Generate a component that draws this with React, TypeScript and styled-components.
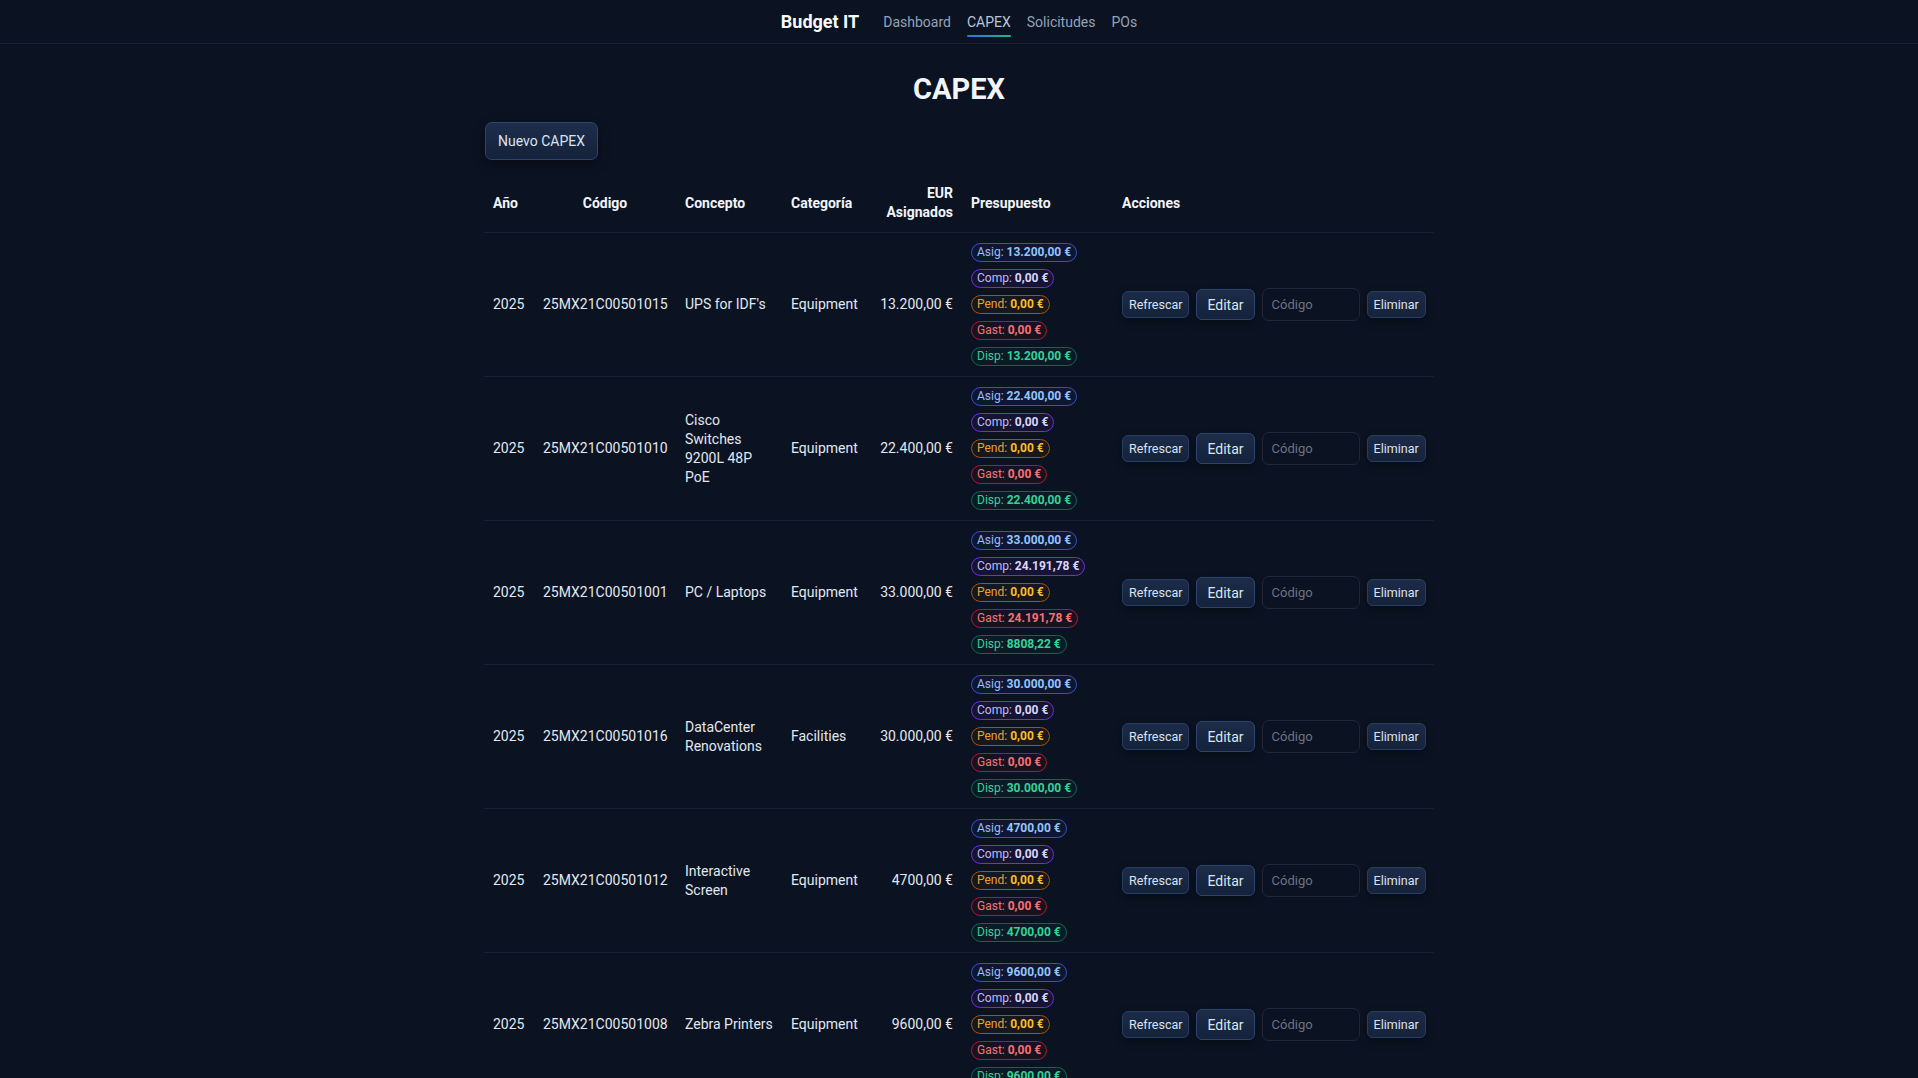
import React from "react"
import styled, { createGlobalStyle } from "styled-components"

const GlobalStyle = createGlobalStyle`
  html, body {
    margin: 0;
    padding: 0;
    background: #0b1221;
    color: #e2e8f0;
    font-family: "Segoe UI", Roboto, "Noto Sans", sans-serif;
    overflow: hidden;
  }
  * { box-sizing: border-box; }
`

type Row = {
  year: number
  code: string
  concept: string
  category: string
  amount: string
  comp: string
  pend: string
  gast: string
  disp: string
}

const rows: Row[] = [
  { year: 2025, code: "25MX21C00501015", concept: "UPS for IDF's", category: "Equipment", amount: "13.200,00 €", comp: "0,00 €", pend: "0,00 €", gast: "0,00 €", disp: "13.200,00 €" },
  { year: 2025, code: "25MX21C00501010", concept: "Cisco Switches 9200L 48P PoE", category: "Equipment", amount: "22.400,00 €", comp: "0,00 €", pend: "0,00 €", gast: "0,00 €", disp: "22.400,00 €" },
  { year: 2025, code: "25MX21C00501001", concept: "PC / Laptops", category: "Equipment", amount: "33.000,00 €", comp: "24.191,78 €", pend: "0,00 €", gast: "24.191,78 €", disp: "8808,22 €" },
  { year: 2025, code: "25MX21C00501016", concept: "DataCenter Renovations", category: "Facilities", amount: "30.000,00 €", comp: "0,00 €", pend: "0,00 €", gast: "0,00 €", disp: "30.000,00 €" },
  { year: 2025, code: "25MX21C00501012", concept: "Interactive Screen", category: "Equipment", amount: "4700,00 €", comp: "0,00 €", pend: "0,00 €", gast: "0,00 €", disp: "4700,00 €" },
  { year: 2025, code: "25MX21C00501008", concept: "Zebra Printers", category: "Equipment", amount: "9600,00 €", comp: "0,00 €", pend: "0,00 €", gast: "0,00 €", disp: "9600,00 €" },
]

const tones = {
  asig: { border: "#2d55c9", bg: "rgba(37, 99, 235, 0.08)", label: "#9fbcf5", value: "#93c5fd" },
  comp: { border: "#6d33d6", bg: "rgba(124, 58, 237, 0.08)", label: "#c4b5fd", value: "#ddd6fe" },
  pend: { border: "#a3530c", bg: "rgba(217, 119, 6, 0.06)", label: "#f0a02a", value: "#fbbf24" },
  gast: { border: "#a61e26", bg: "rgba(220, 38, 38, 0.06)", label: "#f27777", value: "#f87171" },
  disp: { border: "#0b6a4c", bg: "rgba(16, 185, 129, 0.05)", label: "#3ccf95", value: "#34d399" },
}

type Tone = keyof typeof tones

export default function App() {
  return (
    <>
      <GlobalStyle />
      <NavBar>
        <Brand>Budget IT</Brand>
        <NavLink>Dashboard</NavLink>
        <NavLink active>CAPEX</NavLink>
        <NavLink>Solicitudes</NavLink>
        <NavLink>POs</NavLink>
      </NavBar>
      <Main>
        <Title>CAPEX</Title>
        <PrimaryButton>Nuevo CAPEX</PrimaryButton>
        <Table>
          <colgroup>
            <col style={{ width: 50 }} />
            <col style={{ width: 142 }} />
            <col style={{ width: 106 }} />
            <col style={{ width: 86 }} />
            <col style={{ width: 94 }} />
            <col style={{ width: 151 }} />
            <col />
          </colgroup>
          <thead>
            <tr>
              <Th>Año</Th>
              <Th align="center">Código</Th>
              <Th>Concepto</Th>
              <Th>Categoría</Th>
              <Th align="right">
                EUR
                <br />
                Asignados
              </Th>
              <Th>Presupuesto</Th>
              <Th>Acciones</Th>
            </tr>
          </thead>
          <tbody>
            {rows.map((r) => (
              <tr key={r.code}>
                <Td>{r.year}</Td>
                <Td>{r.code}</Td>
                <Td>{r.concept}</Td>
                <Td>{r.category}</Td>
                <Td align="right" nowrap>
                  {r.amount}
                </Td>
                <Td>
                  <BadgeStack>
                    <Badge tone="asig" label="Asig" value={r.amount} />
                    <Badge tone="comp" label="Comp" value={r.comp} />
                    <Badge tone="pend" label="Pend" value={r.pend} />
                    <Badge tone="gast" label="Gast" value={r.gast} />
                    <Badge tone="disp" label="Disp" value={r.disp} />
                  </BadgeStack>
                </Td>
                <Td>
                  <Actions>
                    <SmallButton>Refrescar</SmallButton>
                    <EditButton>Editar</EditButton>
                    <CodeInput placeholder="Código" />
                    <SmallButton>Eliminar</SmallButton>
                  </Actions>
                </Td>
              </tr>
            ))}
          </tbody>
        </Table>
      </Main>
    </>
  )
}

const Badge: React.FC<{ tone: Tone; label: string; value: string }> = ({ tone, label, value }) => (
  <Pill tone={tone}>
    {label}: <b>{value}</b>
  </Pill>
)

const NavBar = styled.nav`
  height: 44px;
  display: flex;
  align-items: center;
  justify-content: center;
  gap: 16px;
  border-bottom: 1px solid #182134;
`

const Brand = styled.span`
  font-size: 18px;
  font-weight: 700;
  color: #f8fafc;
  margin-right: 8px;
`

const NavLink = styled.a<{ active?: boolean }>`
  position: relative;
  font-size: 14px;
  color: ${(p) => (p.active ? "#b9c6d8" : "#94a3b8")};
  cursor: pointer;

  &::after {
    content: "";
    display: ${(p) => (p.active ? "block" : "none")};
    position: absolute;
    left: 0;
    right: 0;
    bottom: -7px;
    height: 2px;
    border-radius: 1px;
    background: linear-gradient(90deg, #3b6fe0, #19b98a);
  }
`

const Main = styled.main`
  width: 950px;
  margin: 0 auto;
  padding-top: 27px;
`

const Title = styled.h1`
  margin: 0 0 15px;
  text-align: center;
  font-size: 29px;
  line-height: 36px;
  font-weight: 700;
  color: #f1f5f9;
`

const PrimaryButton = styled.button`
  display: block;
  height: 38px;
  padding: 0 12px;
  margin-left: 1px;
  border-radius: 7px;
  border: 1px solid #2a4572;
  background: linear-gradient(180deg, #1d2d4b, #15223b);
  color: #dbe4f0;
  font-family: inherit;
  font-size: 14px;
  box-shadow: 0 4px 12px rgba(0, 0, 0, 0.35);
`

const Table = styled.table`
  margin-top: 14px;
  width: 950px;
  table-layout: fixed;
  border-collapse: collapse;
  font-size: 14px;
  line-height: 19px;
`

const Th = styled.th<{ align?: "left" | "center" | "right" }>`
  text-align: ${(p) => p.align || "left"};
  padding: 10px 9px;
  font-weight: 700;
  color: #f1f5f9;
  line-height: 19px;
  vertical-align: middle;
  border-bottom: 1px solid #172033;
`

const Td = styled.td<{ align?: "left" | "right"; nowrap?: boolean }>`
  text-align: ${(p) => p.align || "left"};
  white-space: ${(p) => (p.nowrap ? "nowrap" : "normal")};
  padding: 10px 9px;
  color: #e2e8f0;
  vertical-align: middle;
  border-bottom: 1px solid #172033;
`

const BadgeStack = styled.div`
  display: flex;
  flex-direction: column;
  align-items: flex-start;
  gap: 7px;
`

const Pill = styled.span<{ tone: Tone }>`
  display: inline-block;
  height: 19px;
  padding: 0 5px;
  border-radius: 999px;
  border: 1.5px solid ${(p) => tones[p.tone].border};
  background: ${(p) => tones[p.tone].bg};
  color: ${(p) => tones[p.tone].label};
  font-size: 12px;
  line-height: 16px;
  white-space: nowrap;

  b {
    font-weight: 700;
    color: ${(p) => tones[p.tone].value};
  }
`

const Actions = styled.div`
  display: flex;
  align-items: center;
  gap: 7px;
`

const SmallButton = styled.button`
  height: 27px;
  padding: 0 6px;
  border-radius: 6px;
  border: 1px solid #273f66;
  background: linear-gradient(180deg, #1c2b48, #15223a);
  color: #dbe4f0;
  font-family: inherit;
  font-size: 12.5px;
  box-shadow: 0 3px 8px rgba(0, 0, 0, 0.35);
`

const EditButton = styled(SmallButton)`
  height: 31px;
  padding: 0 10px;
  font-size: 14px;
  border-color: #2a4572;
`

const CodeInput = styled.input`
  width: 98px;
  height: 33px;
  padding: 0 9px;
  border-radius: 7px;
  border: 1px solid #1d283d;
  background: #0b1221;
  color: #e2e8f0;
  font-family: inherit;
  font-size: 13px;
  outline: none;

  &::placeholder {
    color: #6b7383;
  }
`
